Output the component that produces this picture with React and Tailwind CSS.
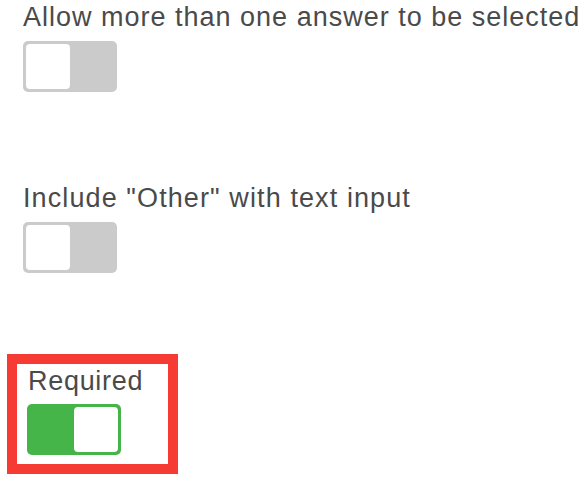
import React from "react";

function Toggle({ on }) {
    return (
        <div
            className={
                "w-[94px] h-[51px] rounded-[5px] p-[3px] flex " +
                (on ? "bg-[#45b449] justify-end" : "bg-[#cbcbcb] justify-start")
            }
        >
            <div className="w-[44px] h-[45px] bg-white rounded-[4px]" />
        </div>
    );
}

export default function App() {
    return (
        <div
            className="bg-white w-[587px] h-[486px] text-[#4a4a4a] pl-[23px]"
            style={{ fontFamily: '"Liberation Sans", Arial, sans-serif' }}
        >
            {/* multi select */}
            <div className="pt-[2px]">
                <div className="text-[27px] leading-[30px] tracking-[1px] whitespace-nowrap">Allow more than one answer to be selected</div>
                <div className="mt-[9px]">
                    <Toggle on={false} />
                </div>
            </div>

            {/* other option */}
            <div className="mt-[91px]">
                <div className="text-[27px] leading-[30px] tracking-[1.1px]">Include "Other" with text input</div>
                <div className="mt-[9px]">
                    <Toggle on={false} />
                </div>
            </div>

            {/* required */}
            <div className="mt-[81px] -ml-[16px] w-[171px] h-[120px] border-[10px] border-[#f53b33] pt-[2px]">
                <div className="ml-[11px] text-[27px] leading-[30px] tracking-[0.7px]">Required</div>
                <div className="mt-[8px] ml-[10px]">
                    <Toggle on={true} />
                </div>
            </div>
        </div>
    );
}
